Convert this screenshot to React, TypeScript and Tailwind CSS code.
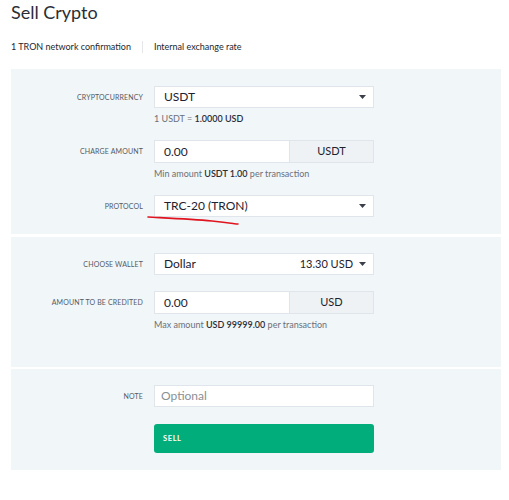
import { ReactNode } from "react";

const Caret = () => (
  <svg width="7" height="4" viewBox="0 0 7 4" className="ml-[6px]">
    <path d="M0 0 L7 0 L3.5 4 Z" fill="#3a3f4a" />
  </svg>
);

const Row = ({ label, children }: { label: string; children: ReactNode }) => (
  <div className="flex">
    <div className="w-[132px] h-[22px] flex items-center justify-end text-[7px] uppercase tracking-[0.02em] text-[#555b63]">
      {label}
    </div>
    <div className="ml-[11px] w-[220px]">{children}</div>
  </div>
);

const Caption = ({ children }: { children: ReactNode }) => (
  <p className="mt-[5px] text-[9px] leading-[12px] text-[#6b7078]">{children}</p>
);

const Select = ({ value, right }: { value: string; right?: string }) => (
  <div className="h-[22px] bg-white border border-[#dfe5ea] flex items-center pl-[9px] pr-[7px] text-[12px] text-[#1d2230]">
    <span className="flex-1">{value}</span>
    {right && <span className="text-[11px]">{right}</span>}
    <Caret />
  </div>
);

const AmountInput = ({ unit }: { unit: string }) => (
  <div className="h-[23px] flex border border-[#dfe5ea]">
    <div className="w-[134px] bg-white flex items-center pl-[9px] text-[12px] text-[#1d2230]">0.00</div>
    <div className="flex-1 bg-[#eef2f5] border-l border-[#dfe5ea] flex items-center justify-center text-[11px] text-[#1d2230]">
      {unit}
    </div>
  </div>
);

const App = () => {
  return (
    <div className="w-[509px] h-[500px] bg-white font-['Lato',sans-serif]">
      <h1 className="pl-[11px] pt-[1px] text-[18px] leading-[22px] text-[#2a2e36]">Sell Crypto</h1>

      <div className="mt-[17px] pl-[11px] flex items-center text-[9px] text-[#23272f] h-[13px]">
        <span>1 TRON network confirmation</span>
        <div className="mx-[11px] w-[1px] h-[12px] bg-[#e3e7ea]"></div>
        <span>Internal exchange rate</span>
      </div>

      <div className="mt-[16px] mx-[11px] w-[490px] bg-[#f1f6f9]">
        {/* currency */}
        <div className="pt-[17px] pb-[17px] flex flex-col gap-[15px]">
          <Row label="Cryptocurrency">
            <Select value="USDT" />
            <Caption>
              1 USDT = <b className="text-[#2a2e36] font-semibold">1.0000 USD</b>
            </Caption>
          </Row>
          <Row label="Charge amount">
            <AmountInput unit="USDT" />
            <Caption>
              Min amount <b className="text-[#2a2e36] font-semibold">USDT 1.00</b> per transaction
            </Caption>
          </Row>
          <div className="relative">
            <Row label="Protocol">
              <Select value="TRC-20 (TRON)" />
            </Row>
            <svg className="absolute left-[136px] top-[20px]" width="95" height="12" viewBox="0 0 95 12">
              <path d="M1 2 C 20 3, 45 4, 65 6 S 88 9, 91 9" stroke="#e0141e" strokeWidth="1.6" fill="none" strokeLinecap="round" />
            </svg>
          </div>
        </div>

        <div className="h-[3px] bg-white"></div>

        {/* wallet */}
        <div className="pt-[16px] pb-[36px] flex flex-col gap-[16px]">
          <Row label="Choose wallet">
            <Select value="Dollar" right="13.30 USD" />
          </Row>
          <Row label="Amount to be credited">
            <AmountInput unit="USD" />
            <Caption>
              Max amount <b className="text-[#2a2e36] font-semibold">USD 99999.00</b> per transaction
            </Caption>
          </Row>
        </div>

        <div className="h-[2px] bg-white"></div>

        {/* note */}
        <div className="pt-[16px] pb-[17px] flex flex-col gap-[17px]">
          <Row label="Note">
            <div className="h-[22px] bg-white border border-[#dfe5ea] flex items-center pl-[6px] text-[12px] text-[#8a8f96]">
              Optional
            </div>
          </Row>
          <div className="flex">
            <div className="w-[143px]"></div>
            <button className="w-[220px] h-[29px] rounded-[3px] bg-[#00ad7b] text-white text-[7.5px] font-bold tracking-[0.08em] text-left pl-[9px]">
              SELL
            </button>
          </div>
        </div>
      </div>
    </div>
  );
};

export default App;
